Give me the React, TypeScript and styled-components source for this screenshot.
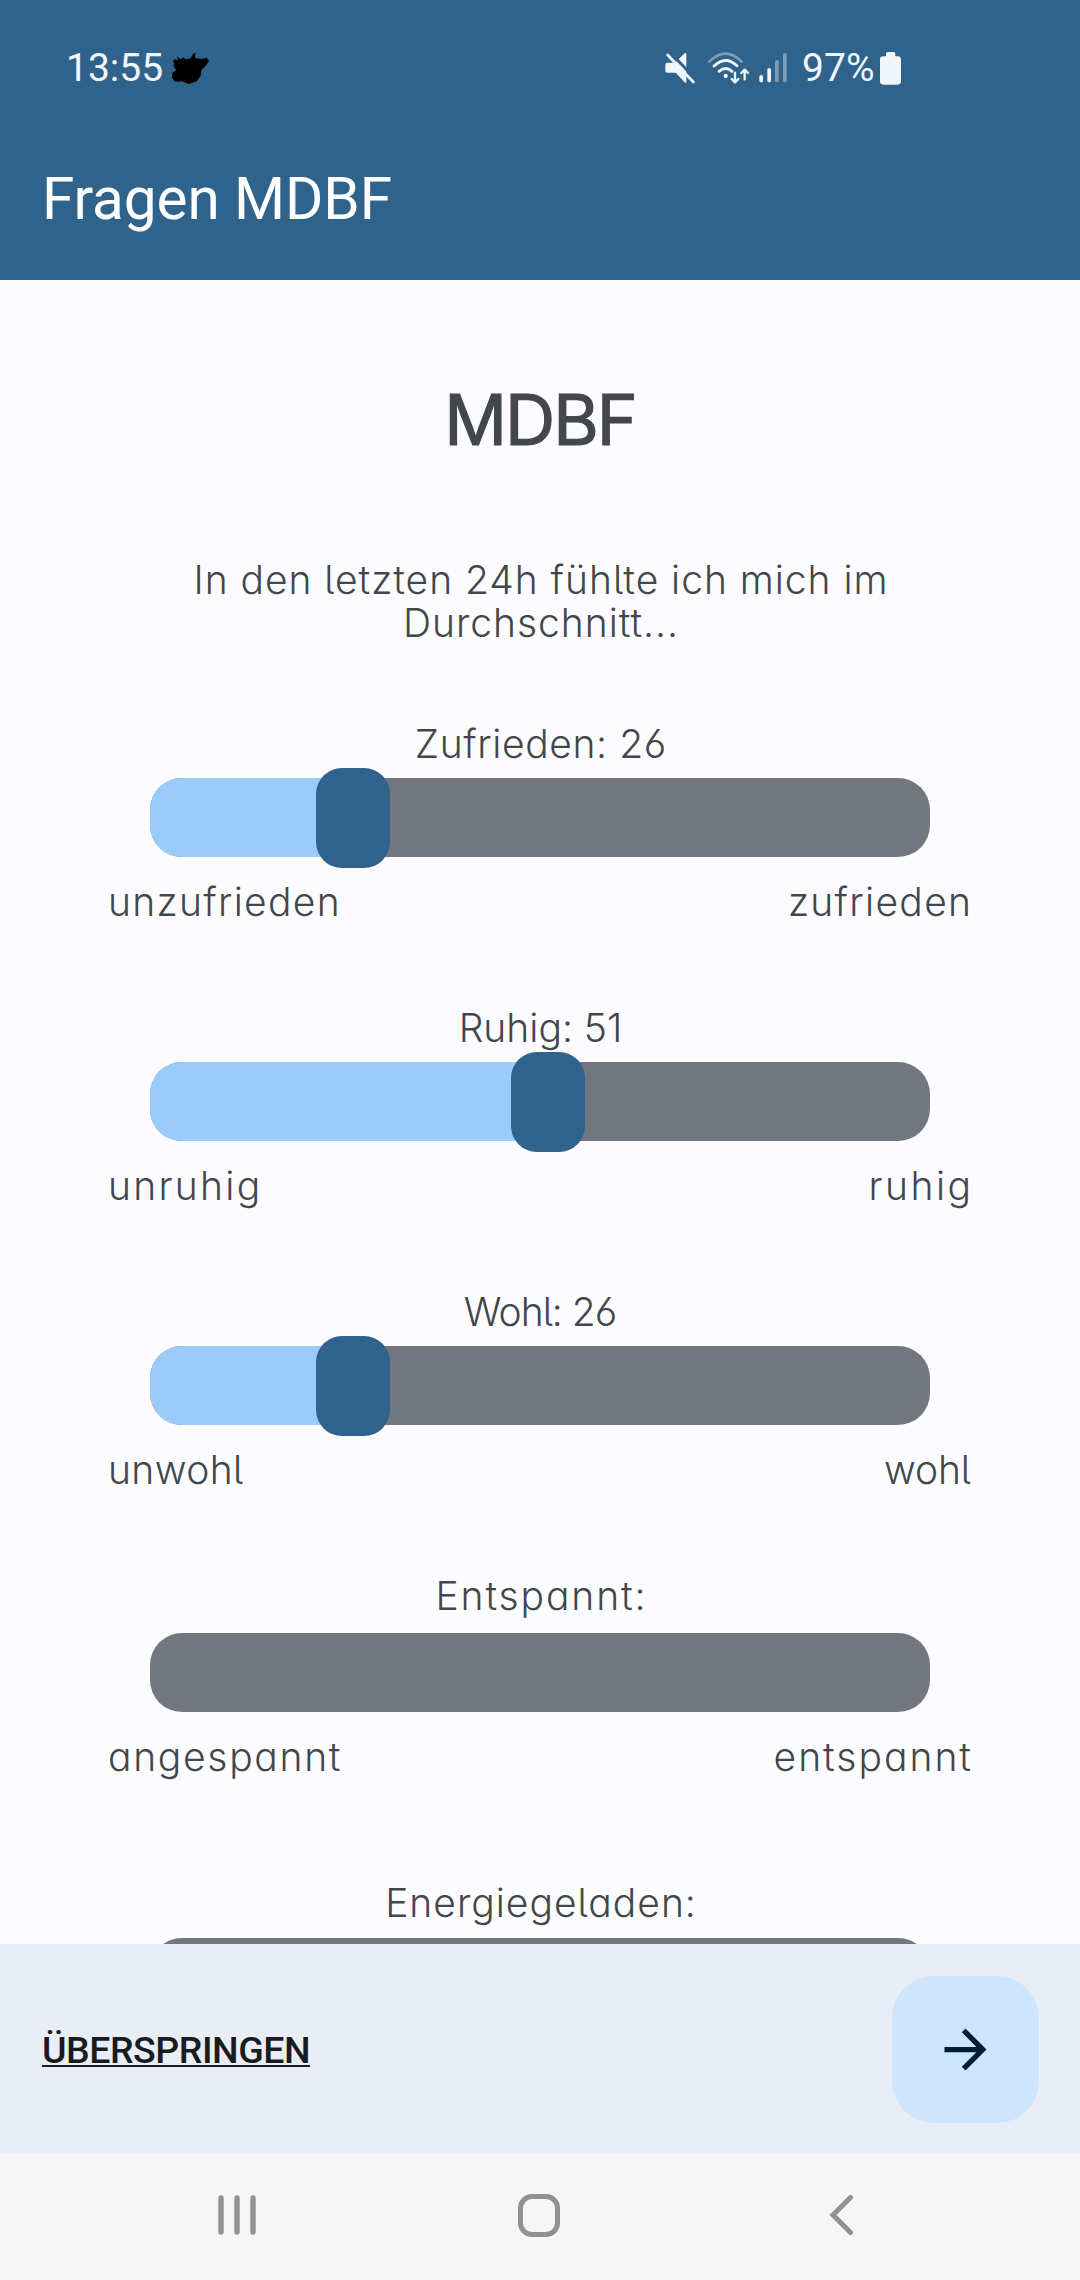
import React from "react";
import styled, { createGlobalStyle } from "styled-components";

const GlobalStyle = createGlobalStyle`
  * { box-sizing: border-box; }
  body { margin: 0; background: #fcfcff; }
  button { border: 0; padding: 0; background: none; font: inherit; }
`;

const blue = "#2f638b";
const ink = "#42474b";

const Screen = styled.div`
  display: flex;
  flex-direction: column;
  width: 1080px;
  height: 2280px;
  overflow: hidden;
  background: #fcfcff;
  font-family: Roboto, sans-serif;
`;

const Header = styled.header`
  flex: none;
  height: 280px;
  background: ${blue};
  color: #fff;
`;

const StatusBar = styled.div`
  display: flex;
  align-items: center;
  justify-content: space-between;
  height: 136px;
  padding: 0 179px 0 66px;
  color: #f1f6fa;
  font-size: 39px;
  line-height: 136px;
`;

const StatusGroup = styled.div`
  display: flex;
  align-items: center;
`;

const Glyph = styled.svg<{ $gap?: number }>`
  display: block;
  flex: none;
  margin-left: ${(p) => p.$gap ?? 0}px;
`;

const Battery = styled.span`
  margin-left: 15px;
  font-size: 39px;
`;

const AppTitle = styled.h1`
  margin: 0;
  padding-left: 42px;
  font-size: 58.5px;
  font-weight: 400;
  line-height: 127px;
  letter-spacing: -0.1px;
`;

const Content = styled.main`
  flex: 1;
  min-height: 0;
  overflow: hidden;
  padding-top: 98px;
  font-family: Inter, sans-serif;
  font-feature-settings: "cv03", "cv05", "cv11";
  color: ${ink};
`;

const Heading = styled.h2`
  margin: 0;
  font-size: 69.5px;
  font-weight: 400;
  line-height: 84px;
  letter-spacing: -2px;
  text-align: center;
  -webkit-text-stroke: 1.2px ${ink};
`;

const Prompt = styled.p`
  margin: 97px 0 79px;
  padding-left: 2px;
  font-size: 39px;
  font-weight: 350;
  line-height: 42.5px;
  letter-spacing: 0.96px;
  text-align: center;
`;

const Question = styled.section<{ $after: number }>`
  padding: 0 107px;
  margin-bottom: ${(p) => p.$after}px;
`;

const Label = styled.div<{ $spacing: number }>`
  font-size: 39px;
  font-weight: 350;
  line-height: 42px;
  letter-spacing: ${(p) => p.$spacing}px;
  text-indent: ${(p) => p.$spacing + 1}px;
  text-align: center;
`;

const Track = styled.div<{ $gap: number }>`
  position: relative;
  height: 79px;
  margin: ${(p) => p.$gap}px 43px 23.5px;
  border-radius: 32px;
  background: #72777f;
`;

const Fill = styled.div`
  height: 100%;
  border-radius: 32px 0 0 32px;
  background: #9bcbfb;
`;

const Thumb = styled.div`
  position: absolute;
  top: -10px;
  width: 74px;
  height: 100px;
  margin-left: -37px;
  border-radius: 26px;
  background: ${blue};
`;

const Ends = styled.div`
  display: flex;
  justify-content: space-between;
  padding: 0 2px 0 1px;
`;

const End = styled.span<{ $spacing: number }>`
  margin-right: ${(p) => -p.$spacing}px;
  font-size: 39px;
  font-weight: 350;
  line-height: 42px;
  letter-spacing: ${(p) => p.$spacing}px;
`;

const ActionBar = styled.footer`
  display: flex;
  flex: none;
  align-items: center;
  justify-content: space-between;
  height: 210px;
  padding: 0 41px 0 42px;
  background: #e9eef6;
`;

const Skip = styled.button`
  padding-top: 2px;
  color: #191c1e;
  font-size: 37.5px;
  font-weight: 500;
  line-height: 44px;
  letter-spacing: -0.48px;
  text-decoration: underline;
  text-decoration-thickness: 2px;
  text-underline-offset: 2px;
  text-decoration-skip-ink: none;
`;

const Next = styled.button`
  display: flex;
  align-items: center;
  justify-content: center;
  width: 147px;
  height: 147px;
  border-radius: 42px;
  background: #cde5fd;
`;

const NavBar = styled.nav`
  display: flex;
  flex: none;
  align-items: center;
  height: 126px;
  padding-left: 218px;
  padding-bottom: 4px;
  background: #f6f6f6;
`;

type Item = {
  name: string;
  value?: number;
  low: string;
  high: string;
  spacing: [number, number, number];
  gap?: number;
  after?: number;
};

const items: Item[] = [
  { name: "Zufrieden", value: 26, low: "unzufrieden", high: "zufrieden", spacing: [0.6, 1.3, 1.3] },
  { name: "Ruhig", value: 51, low: "unruhig", high: "ruhig", spacing: [0, 2.3, 2.5] },
  { name: "Wohl", value: 26, low: "unwohl", high: "wohl", spacing: [-1, 0.4, -0.1] },
  { name: "Entspannt", low: "angespannt", high: "entspannt", spacing: [1.9, 1.7, 2], gap: 16, after: 104.5 },
  { name: "Energiegeladen", low: "", high: "", spacing: [1, 0, 0], gap: 14 },
];

const Slider = ({ item }: { item: Item }) => {
  const { name, value, low, high, spacing, gap = 13, after = 84.5 } = item;
  return (
    <Question $after={after}>
      <Label $spacing={spacing[0]}>{value === undefined ? `${name}:` : `${name}: ${value}`}</Label>
      <Track $gap={gap}>
        {value !== undefined && (
          <>
            <Fill style={{ width: `${value}%` }} />
            <Thumb style={{ left: `${value}%` }} />
          </>
        )}
      </Track>
      <Ends>
        <End $spacing={spacing[1]}>{low}</End>
        <End $spacing={spacing[2]}>{high}</End>
      </Ends>
    </Question>
  );
};

const NotificationGlyph = () => (
  <Glyph $gap={9} width="37" height="31" viewBox="396 69 111 93">
    <path d="M398 94L405 88L414 91L412 79L421 88L432 82L435 88L448 86L455 80L461 69L466 70L465 84L485 87L500 83L507 92L497 108L484 119L482 138L470 154L446 162L425 154L405 155L396 143L397 128L409 120L400 108L403 100Z" />
  </Glyph>
);

const MuteGlyph = () => (
  <Glyph width="30" height="32" viewBox="30 37 90 96">
    <path fill="currentColor" d="M31 75Q31 69 37 69H60L89 41Q94 38 94 44V126Q94 132 89 128L62 99H37Q31 99 31 93Z" />
    <path stroke={blue} strokeWidth="9" d="M42 34L124 121" />
    <path stroke="currentColor" strokeWidth="8" strokeLinecap="round" d="M38 46L115 127" />
  </Glyph>
);

const WifiGlyph = () => (
  <Glyph $gap={13.3} width="42" height="32" viewBox="160 36 126 96" fill="none" stroke="currentColor" strokeLinecap="round">
    <path strokeWidth="8" opacity="0.4" d="M164 65Q213 17 261 65" />
    <path strokeWidth="8.5" d="M178 78Q213 45 247 77" />
    <path strokeWidth="8.5" d="M193 94Q213 77 232 94" />
    <circle cx="213" cy="108" r="6.5" fill="currentColor" stroke="none" />
    <g strokeWidth="7" strokeLinejoin="round">
      <path d="M241 98V126M231 117L241 127L251 117" />
      <path d="M270 118V90M260 99L270 89L280 99" />
    </g>
  </Glyph>
);

const SignalGlyph = () => (
  <Glyph $gap={8.7} width="28" height="32" viewBox="312 36 84 96" fill="currentColor">
    <rect x="313" y="105" width="11" height="22" rx="5" />
    <rect x="337" y="84" width="11" height="43" rx="5" />
    <rect x="360" y="60" width="11" height="67" rx="5" opacity="0.4" />
    <rect x="384" y="39" width="11" height="88" rx="5" opacity="0.4" />
  </Glyph>
);

const BatteryGlyph = () => (
  <Glyph $gap={5.5} width="21" height="33" viewBox="720 64 63 99" fill="currentColor">
    <rect x="738" y="64" width="28" height="24" rx="5" />
    <rect x="720" y="77" width="63" height="85" rx="10" />
  </Glyph>
);

export default function App() {
  return (
    <>
      <GlobalStyle />
      <Screen>
        <Header>
          <StatusBar>
            <StatusGroup>
              13:55
              <NotificationGlyph />
            </StatusGroup>
            <StatusGroup>
              <MuteGlyph />
              <WifiGlyph />
              <SignalGlyph />
              <Battery>97%</Battery>
              <BatteryGlyph />
            </StatusGroup>
          </StatusBar>
          <AppTitle>Fragen MDBF</AppTitle>
        </Header>

        <Content>
          <Heading>MDBF</Heading>
          <Prompt>
            In den letzten 24h fühlte ich mich im
            <br />
            Durchschnitt...
          </Prompt>
          {items.map((item) => (
            <Slider key={item.name} item={item} />
          ))}
        </Content>

        <ActionBar>
          <Skip>ÜBERSPRINGEN</Skip>
          <Next aria-label="Weiter">
            <svg width="63" height="63" viewBox="0 0 24 24" fill="#001d32">
              <path d="M12 4l-1.41 1.41L16.17 11H4v2h12.17l-5.58 5.59L12 20l8-8z" />
            </svg>
          </Next>
        </ActionBar>

        <NavBar>
          <Glyph width="38" height="42" viewBox="0 0 38 42" stroke="#919191" strokeWidth="5.4" strokeLinecap="round">
            <path d="M3 4V38M19 4V38M35 4V38" />
          </Glyph>
          <Glyph $gap={262} width="42" height="43" viewBox="0 0 42 43" fill="none" stroke="#919191" strokeWidth="5">
            <rect x="2.5" y="2.5" width="37" height="38" rx="11.5" />
          </Glyph>
          <Glyph $gap={269} width="26" height="42" viewBox="0 0 26 42" fill="none" stroke="#919191" strokeWidth="5" strokeLinecap="round">
            <path d="M21.5 3.5L4 21L21.5 38.5" />
          </Glyph>
        </NavBar>
      </Screen>
    </>
  );
}
